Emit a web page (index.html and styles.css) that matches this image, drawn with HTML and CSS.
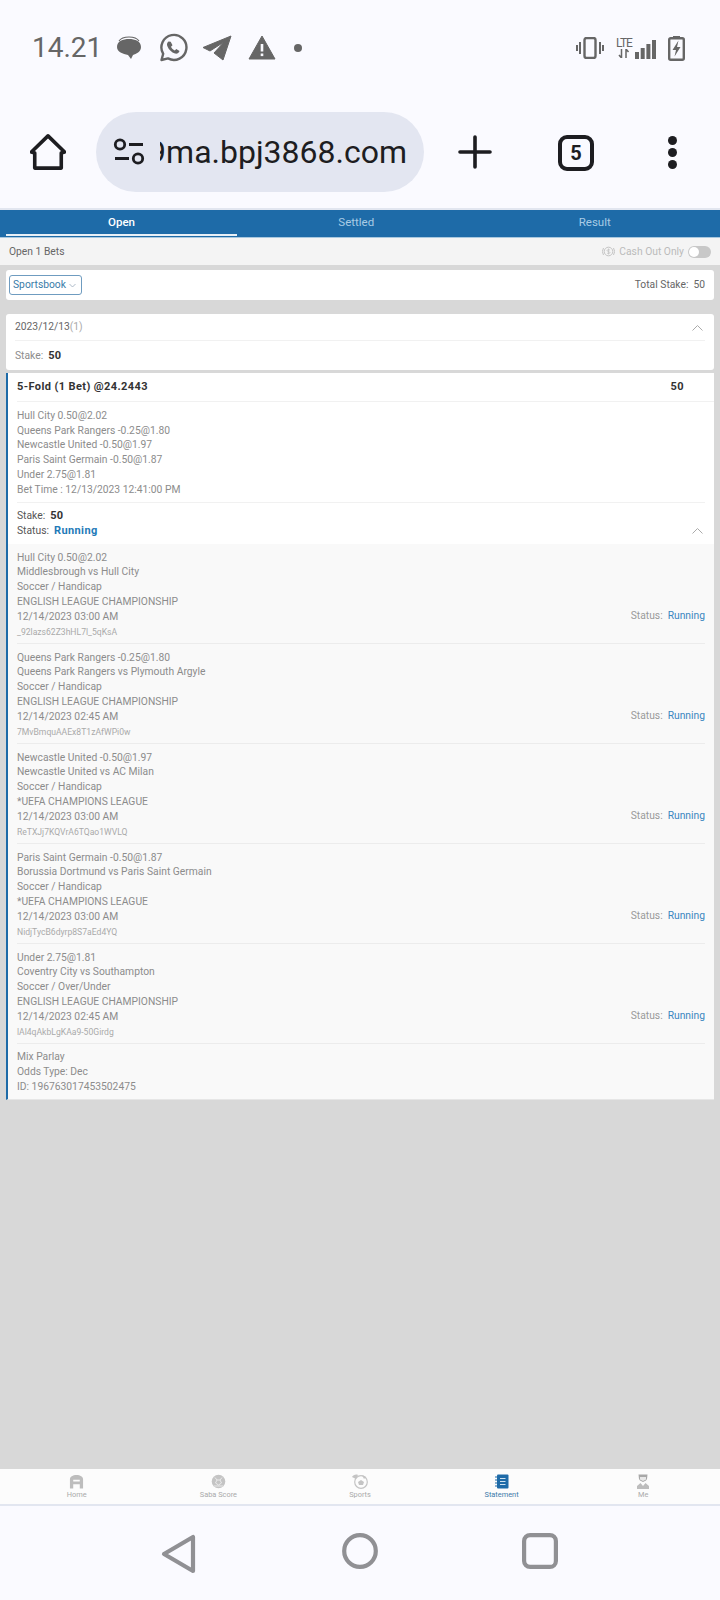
FILE: index.html
```html
<!DOCTYPE html>
<html lang="en">
<head>
    <meta charset="UTF-8">
    <meta name="viewport" content="width=device-width, initial-scale=1.0">
    <title>Statement</title>
    <link rel="stylesheet" href="styles.css">
</head>
<body>
    <div class="status-bar">
        <span class="clock">14.21</span>
        <svg class="ic-msg" width="26" height="26" viewBox="0 0 26 26"><path d="M3 6c2-3 6-4 10-4s8 1 10 4" fill="none" stroke="#666" stroke-width="1.2"/><path d="M13 4c6 0 12 2 12 8 0 5-5 7-8 8l-2 4-3-4C7 19 1 17 1 12 1 6 7 4 13 4z" fill="#666"/></svg>
        <svg class="ic-wa" width="30" height="30" viewBox="0 0 30 30"><path d="M3.5 27l1.700-6.200A12.500 12.500 0 1 1 10 25.400z" fill="none" stroke="#666" stroke-width="2.400" stroke-linejoin="round"/><path d="M10.500 8.500c-1.500 1-2 3-1 5 1.500 3.500 4 5.800 7.500 7 2 .5 4-.5 4.500-2.500l-3.200-2-1.500 1.500c-1.800-.8-3-2-3.800-3.800l1.500-1.500-1.800-3.500z" fill="#666"/></svg>
        <svg class="ic-tg" width="30" height="26" viewBox="0 0 30 26"><path d="M29 1L1 12.500l7 3.500L22 7 12 18l9 7z" fill="#666" stroke="#666" stroke-linejoin="round"/></svg>
        <svg class="ic-warn" width="28" height="25" viewBox="0 0 28 25"><path d="M14 1L1 24h26z" fill="#666" stroke="#666" stroke-linejoin="round"/><rect x="12.700" y="9" width="2.600" height="7.500" fill="#fafaff"/><rect x="12.700" y="18.500" width="2.600" height="2.600" fill="#fafaff"/></svg>
        <span class="dot"></span>
        <span class="spacer"></span>
        <svg class="ic-vib" width="28" height="22" viewBox="0 0 28 22"><rect x="8.500" y="1" width="11" height="20" rx="2" fill="none" stroke="#666" stroke-width="2.400"/><path d="M4 5v12M1 8v6M24 5v12M27 8v6" stroke="#666" stroke-width="2"/></svg>
        <span class="lte">LTE<svg width="12" height="9" viewBox="0 0 12 9"><path d="M3.500 0v9M1 6l2.500 3M8 9V0M8 0l2.500 3" stroke="#666" stroke-width="1.500" fill="none"/></svg></span>
        <svg class="ic-sig" width="21" height="19" viewBox="0 0 21 19"><path d="M0 12h4v7H0zM5.700 8h4v11h-4zM11.400 4h4v15h-4zM17 0h4v19h-4z" fill="#666"/></svg>
        <svg class="ic-bat" width="17" height="26" viewBox="0 0 17 26"><path d="M5 1h7v2H5z" fill="#666"/><rect x="1.200" y="3.200" width="14.600" height="21.600" rx="1.500" fill="none" stroke="#666" stroke-width="2.400"/><path d="M10.500 5.500L4.500 15H8l-1.500 6.500L12.500 12H9z" fill="#666"/></svg>
    </div>

    <div class="browser-bar">
        <svg class="ic-home" width="36" height="36" viewBox="0 0 38 38"><path d="M1.500 19L19 2l17.500 17-3.500 1v16H5V20z" fill="none" stroke="#1d1d21" stroke-width="3.800" stroke-linejoin="round"/></svg>
        <div class="url-pill">
            <svg width="32" height="28" viewBox="0 0 32 28"><circle cx="7" cy="6.500" r="4.700" fill="none" stroke="#1d1d21" stroke-width="2.800"/><path d="M16 6.500h14M2 20.500h14" stroke="#1d1d21" stroke-width="2.800"/><circle cx="25" cy="20.500" r="4.700" fill="none" stroke="#1d1d21" stroke-width="2.800"/></svg>
            <div class="url-clip"><span>9ma.bpj3868.com</span></div>
        </div>
        <svg class="ic-plus" width="34" height="34" viewBox="0 0 34 34"><path d="M17 2v30M2 17h30" stroke="#1d1d21" stroke-width="3.600" stroke-linecap="round"/></svg>
        <div class="tab-count">5</div>
        <div class="more"><i></i><i></i><i></i></div>
    </div>

    <div class="tabs">
        <div class="tab active">Open</div>
        <div class="tab">Settled</div>
        <div class="tab">Result</div>
    </div>

    <div class="sub-bar">
        <span>Open 1 Bets</span>
        <div class="cash-out">
            <svg width="13" height="13" viewBox="0 0 13 13"><circle cx="6.500" cy="6.500" r="4.300" fill="none" stroke="#c4c4c4"/><path d="M1.500 3a6.200 6.200 0 0 0 0 7M11.500 3a6.200 6.200 0 0 1 0 7" fill="none" stroke="#c4c4c4"/><path d="M8 5.200C7.200 4.400 5 4.500 5 5.600s3 .9 3 2S5.800 8.800 5 8M6.500 3.500v6" fill="none" stroke="#c4c4c4" stroke-width=".8"/></svg>
            <span>Cash Out Only</span>
            <span class="toggle"></span>
        </div>
    </div>

    <main class="content">
        <div class="card filter-card">
            <div class="select">Sportsbook
                <svg width="7" height="5" viewBox="0 0 7 5"><path d="M.5 1L3.500 4 6.500 1" fill="none" stroke="#9ab" stroke-width=".8"/></svg>
            </div>
            <div class="total">Total Stake:<span>50</span></div>
        </div>

        <div class="card date-card">
            <div class="date-row">
                <span>2023/12/13<em>(1)</em></span>
                <svg class="chev" width="11" height="6" viewBox="0 0 11 6"><path d="M.5 5.500l5-5 5 5" fill="none" stroke="#aaa"/></svg>
            </div>
            <div class="date-stake"><span>Stake:</span><b>50</b></div>
        </div>

        <div class="bet-card">
            <div class="bet-head"><b>5-Fold (1 Bet) @24.2443</b><b class="bet-amt">50</b></div>
            <div class="bet-lines">
                <div>Hull City 0.50@2.02</div>
                <div>Queens Park Rangers -0.25@1.80</div>
                <div>Newcastle United -0.50@1.97</div>
                <div>Paris Saint Germain -0.50@1.87</div>
                <div>Under 2.75@1.81</div>
                <div>Bet Time : 12/13/2023 12:41:00 PM</div>
            </div>
            <div class="bet-status">
                <div>
                    <div>Stake:<b>50</b></div>
                    <div>Status:<b class="running">Running</b></div>
                </div>
                <svg class="chev" width="11" height="6" viewBox="0 0 11 6"><path d="M.5 5.500l5-5 5 5" fill="none" stroke="#aaa"/></svg>
            </div>
            <div class="legs">
                <div class="leg">
                    <div class="leg-info">
                        <div>Hull City 0.50@2.02</div>
                        <div>Middlesbrough vs Hull City</div>
                        <div>Soccer / Handicap</div>
                        <div>ENGLISH LEAGUE CHAMPIONSHIP</div>
                        <div>12/14/2023 03:00 AM</div>
                        <div class="leg-id">_92lazs62Z3hHL7l_5qKsA</div>
                    </div>
                    <div class="leg-status">Status:<span>Running</span></div>
                </div>
                <div class="leg">
                    <div class="leg-info">
                        <div>Queens Park Rangers -0.25@1.80</div>
                        <div>Queens Park Rangers vs Plymouth Argyle</div>
                        <div>Soccer / Handicap</div>
                        <div>ENGLISH LEAGUE CHAMPIONSHIP</div>
                        <div>12/14/2023 02:45 AM</div>
                        <div class="leg-id">7MvBmquAAEx8T1zAfWPi0w</div>
                    </div>
                    <div class="leg-status">Status:<span>Running</span></div>
                </div>
                <div class="leg">
                    <div class="leg-info">
                        <div>Newcastle United -0.50@1.97</div>
                        <div>Newcastle United vs AC Milan</div>
                        <div>Soccer / Handicap</div>
                        <div>*UEFA CHAMPIONS LEAGUE</div>
                        <div>12/14/2023 03:00 AM</div>
                        <div class="leg-id">ReTXJj7KQVrA6TQao1WVLQ</div>
                    </div>
                    <div class="leg-status">Status:<span>Running</span></div>
                </div>
                <div class="leg">
                    <div class="leg-info">
                        <div>Paris Saint Germain -0.50@1.87</div>
                        <div>Borussia Dortmund vs Paris Saint Germain</div>
                        <div>Soccer / Handicap</div>
                        <div>*UEFA CHAMPIONS LEAGUE</div>
                        <div>12/14/2023 03:00 AM</div>
                        <div class="leg-id">NidjTycB6dyrp8S7aEd4YQ</div>
                    </div>
                    <div class="leg-status">Status:<span>Running</span></div>
                </div>
                <div class="leg">
                    <div class="leg-info">
                        <div>Under 2.75@1.81</div>
                        <div>Coventry City vs Southampton</div>
                        <div>Soccer / Over/Under</div>
                        <div>ENGLISH LEAGUE CHAMPIONSHIP</div>
                        <div>12/14/2023 02:45 AM</div>
                        <div class="leg-id">lAl4qAkbLgKAa9-50Girdg</div>
                    </div>
                    <div class="leg-status">Status:<span>Running</span></div>
                </div>
                <div class="bet-foot">
                    <div>Mix Parlay</div>
                    <div>Odds Type: Dec</div>
                    <div>ID: 196763017453502475</div>
                </div>
            </div>
        </div>
    </main>

    <nav class="bottom-nav">
        <div class="nav-item">
            <svg width="15" height="15" viewBox="0 0 16 15"><path d="M1 15V5C1 2.500 4 .5 8 .5S15 2.500 15 5v10h-3.500v-4.500h-7V15zM4.500 7.500h7V5.500h-7z" fill="#bdbdbd" fill-rule="evenodd"/></svg>
            <span>Home</span>
        </div>
        <div class="nav-item">
            <svg width="15" height="15" viewBox="0 0 15 15"><circle cx="7.500" cy="7.500" r="6.800" fill="#c4c4c4"/><path d="M4 3.500l2 2.500-1.500 3 3 2 3-2L9 6l2-2.500M6 6h3M3 12h9" fill="none" stroke="#eee" stroke-width=".9"/></svg>
            <span>Saba Score</span>
        </div>
        <div class="nav-item">
            <svg width="17" height="15" viewBox="0 0 17 15"><circle cx="10" cy="8" r="6.300" fill="none" stroke="#c4c4c4" stroke-width="1.200"/><path d="M1 3c1-2 4-3 6-2L5 5zM7 8l3-2 3 2-1 3H8zM11 1l4 2-2 2z" fill="#c4c4c4"/></svg>
            <span>Sports</span>
        </div>
        <div class="nav-item active">
            <svg width="14" height="15" viewBox="0 0 14 15"><rect x="2" y=".5" width="11.500" height="14" rx="1" fill="#1e6ba8"/><path d="M5 4.500h5.500M5 7.500h5.500M5 10.500h5.500" stroke="#cfe2f0"/><path d="M0 3h2M0 6h2M0 9h2M0 12h2" stroke="#1e6ba8"/></svg>
            <span>Statement</span>
        </div>
        <div class="nav-item">
            <svg width="12" height="15" viewBox="0 0 12 15"><path d="M1.500 .5h9L10 5 9 6.500 6 8 3 6.500 2 5z" fill="#a8a8a8"/><path d="M3 3h6v2.500L6 7 3 5.500z" fill="#e8e8e8"/><path d="M0 15v-3l3.500-3L6 12l2.500-3 3.500 3v3z" fill="#bdbdbd"/></svg>
            <span>Me</span>
        </div>
    </nav>

    <div class="android-nav">
        <svg width="38" height="42" viewBox="0 0 38 42"><path d="M4 21L33 4v34z" fill="none" stroke="#909094" stroke-width="4.200" stroke-linejoin="round"/></svg>
        <svg width="36" height="36" viewBox="0 0 36 36"><circle cx="18" cy="18" r="15.800" fill="none" stroke="#909094" stroke-width="4.200"/></svg>
        <svg width="36" height="36" viewBox="0 0 36 36"><rect x="2.100" y="2.100" width="31.800" height="31.800" rx="6" fill="none" stroke="#909094" stroke-width="4.200"/></svg>
    </div>
</body>
</html>
```

FILE: styles.css
```css
* {
    margin: 0;
    padding: 0;
    box-sizing: border-box;
}

html, body {
    height: 100%;
    overflow: hidden;
    font-family: Roboto, "Liberation Sans", sans-serif;
    background-color: #d8d8d8;
}

body {
    display: flex;
    flex-direction: column;
    height: 1600px;
}

/* phone status bar */
.status-bar {
    height: 95px;
    background-color: #fafaff;
    display: flex;
    align-items: center;
    padding-left: 32px;
    padding-right: 35px;
}

.clock {
    font-size: 28px;
    color: #666;
    width: 84px;
}

.ic-msg { margin-right: 16px; }
.ic-wa { margin-right: 14px; }
.ic-tg { margin-right: 16px; }
.ic-warn { margin-right: 18px; }

.dot {
    width: 8px;
    height: 8px;
    border-radius: 50%;
    background-color: #666;
}

.spacer {
    flex: 1;
}

.lte {
    display: flex;
    flex-direction: column;
    align-items: center;
    width: 22px;
    margin-left: 9px;
    font-size: 12px;
    line-height: 11px;
    color: #666;
    letter-spacing: -1px;
}

.ic-sig { margin-left: 0; margin-top: 3px; }
.ic-bat { margin-left: 12px; }

/* browser bar */
.browser-bar {
    height: 115px;
    background-color: #fafaff;
    border-bottom: 2px solid #e2e6f0;
    display: flex;
    align-items: flex-start;
    padding-top: 17px;
}

.ic-home {
    margin-left: 30px;
    margin-top: 22px;
}

.url-pill {
    width: 328px;
    height: 80px;
    margin-left: 30px;
    border-radius: 40px;
    background-color: #e3e6f1;
    display: flex;
    align-items: center;
    padding-left: 17px;
}

.url-clip {
    width: 247px;
    margin-left: 15px;
    overflow: hidden;
    display: flex;
    justify-content: flex-end;
    font-size: 32px;
    color: #1d1d21;
    white-space: nowrap;
}

.ic-plus {
    margin-left: 34px;
    margin-top: 23px;
}

.tab-count {
    width: 36px;
    height: 36px;
    margin-left: 66px;
    margin-top: 23px;
    border: 4px solid #1d1d21;
    border-radius: 9px;
    font-size: 20px;
    font-weight: 700;
    color: #1d1d21;
    display: flex;
    align-items: center;
    justify-content: center;
}

.more {
    margin-left: 74px;
    margin-top: 24px;
    display: flex;
    flex-direction: column;
    gap: 3px;
}

.more i {
    display: block;
    width: 9px;
    height: 9px;
    border-radius: 50%;
    background-color: #1d1d21;
}

/* site */
.tabs {
    height: 28px;
    background-color: #1e6ba8;
    border-bottom: 1px solid #a9c8df;
    padding: 0 6px;
    display: flex;
    font-size: 11.5px;
    color: #a9cbe5;
}

.tab {
    flex: 1;
    text-align: center;
    line-height: 25px;
}

.tab.active {
    flex: 0 0 231px;
    color: #fff;
    font-weight: 500;
    border-bottom: 2px solid #e8f0f7;
    height: 26px;
}

.sub-bar {
    height: 27px;
    background-color: #f4f4f4;
    display: flex;
    align-items: center;
    justify-content: space-between;
    padding: 0 9px;
    font-size: 10.3px;
    color: #666;
}

.cash-out {
    display: flex;
    align-items: center;
    color: #bbb;
}

.cash-out svg {
    margin-right: 4px;
}

.toggle {
    width: 23px;
    height: 12px;
    margin-left: 4px;
    border-radius: 6px;
    background-color: #c8c8c8;
    position: relative;
}

.toggle::before {
    content: "";
    position: absolute;
    left: 1px;
    top: 1px;
    width: 10px;
    height: 10px;
    border-radius: 50%;
    background-color: #fff;
}

.content {
    flex: 1;
    padding: 5px 6px 0;
    font-size: 10.3px;
    line-height: 14.7px;
    color: #8c8c8c;
}

.card {
    background-color: #fff;
    border-radius: 3px;
}

.filter-card {
    height: 30px;
    display: flex;
    align-items: center;
    justify-content: space-between;
    padding: 0 9px 0 3px;
    margin-bottom: 14px;
}

.select {
    height: 20px;
    width: 73px;
    border: 1px solid #6f9cc0;
    border-radius: 3px;
    color: #3a7ca8;
    display: flex;
    align-items: center;
    justify-content: space-between;
    padding: 0 5px 0 3px;
}

.total {
    color: #666;
}

.total span {
    margin-left: 5px;
}

.date-card {
    height: 56px;
    padding: 0 9px;
    margin-bottom: 3px;
}

.date-row {
    height: 27px;
    padding-top: 1px;
    border-bottom: 1px solid #f1f1f1;
    display: flex;
    align-items: center;
    justify-content: space-between;
    color: #666;
}

.date-row em {
    font-style: normal;
    color: #aaa;
}

.date-row .chev {
    margin-right: 2px;
}

.date-stake {
    height: 29px;
    padding-top: 2px;
    display: flex;
    align-items: center;
}

.date-stake b {
    margin-left: 5px;
    font-size: 11px;
    letter-spacing: 0.4px;
    color: #333;
}

.bet-card {
    background-color: #fff;
    border-left: 2px solid #1e6ba8;
    border-bottom: 1px solid #e6e6e6;
}

.bet-head {
    height: 29px;
    margin: 0 0 0 9px;
    padding-right: 30px;
    border-bottom: 1px solid #f1f1f1;
    display: flex;
    align-items: center;
    justify-content: space-between;
    font-size: 11px;
    color: #333;
    letter-spacing: 0.4px;
}

.bet-lines {
    margin: 0 9px;
    padding: 7px 0 5px;
    border-bottom: 1px solid #f1f1f1;
}

.bet-status {
    height: 41px;
    margin: 0 9px;
    display: flex;
    align-items: flex-end;
    justify-content: space-between;
    padding-bottom: 6px;
    color: #555;
}

.bet-status .chev {
    margin-right: 2px;
    margin-bottom: 4px;
}

.bet-status b {
    margin-left: 5px;
    font-size: 11px;
    letter-spacing: 0.4px;
    color: #333;
}

.bet-status b.running {
    color: #1e7ab8;
}

.legs {
    background-color: #f9f9f9;
    padding: 0 9px;
}

.leg {
    height: 100px;
    padding-top: 6px;
    border-bottom: 1px solid #ececec;
    display: flex;
    justify-content: space-between;
    align-items: flex-end;
}

.leg-id {
    font-size: 8.6px;
    line-height: 16px;
    color: #aaa;
    padding-bottom: 3px;
}

.leg-status {
    padding-bottom: 20px;
    color: #999;
}

.leg-status span {
    margin-left: 5px;
    color: #3a86bf;
}

.bet-foot {
    padding: 6px 0 5px;
}

/* bottom tab bar */
.bottom-nav {
    height: 37px;
    background-color: #fcfcfc;
    border-bottom: 2px solid #e2e6f0;
    padding: 0 6px;
    display: flex;
}

.nav-item {
    flex: 1;
    display: flex;
    flex-direction: column;
    align-items: center;
    padding-top: 5px;
    font-size: 7.4px;
    line-height: 11px;
    color: #aaa;
}

.nav-item.active {
    color: #3c7ba9;
}

.android-nav {
    height: 94px;
    background-color: #fafaff;
    padding-left: 160px;
    padding-top: 27px;
    display: flex;
    align-items: flex-start;
    gap: 144px;
}
```
